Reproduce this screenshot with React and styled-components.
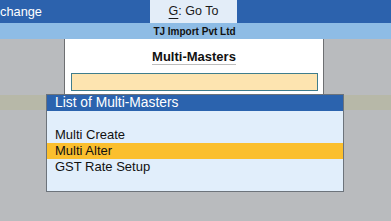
import React from "react";
import styled, { createGlobalStyle } from "styled-components";

const GlobalStyle = createGlobalStyle`
  html, body {
    margin: 0;
    padding: 0;
  }
  body {
    font-family: "Liberation Sans", Arial, sans-serif;
    background: #b9bbbe;
  }
`;

const items = ["Multi Create", "Multi Alter", "GST Rate Setup"];

const App = () => {
  const selected = 1;
  return (
    <Screen>
      <GlobalStyle />
      <TopBar>
        <BarText>change</BarText>
        <GoTo>
          <Key>G</Key>:&nbsp;Go To
        </GoTo>
      </TopBar>
      <CompanyStrip>TJ Import Pvt Ltd</CompanyStrip>
      <Workspace>
        <Panel>
          <Title>Multi-Masters</Title>
          <Input />
        </Panel>
        <ListBox>
          <ListHeader>List of Multi-Masters</ListHeader>
          <ListBody>
            {items.map((item, idx) => (
              <Item key={item} $active={idx === selected}>
                {item}
              </Item>
            ))}
          </ListBody>
        </ListBox>
      </Workspace>
    </Screen>
  );
};

const Screen = styled.div`
  width: 391px;
  height: 221px;
  overflow: hidden;
  display: flex;
  flex-direction: column;
`;

const TopBar = styled.div`
  height: 23px;
  background: #2c62ad;
  display: flex;
  align-items: stretch;
`;

const BarText = styled.div`
  width: 150px;
  color: #ffffff;
  font-size: 12.8px;
  line-height: 23px;
`;

const GoTo = styled.div`
  width: 87px;
  background: #e3edf8;
  color: #1a1a1a;
  font-size: 12.5px;
  line-height: 23px;
  text-align: center;
`;

const Key = styled.span`
  text-decoration: underline;
  text-underline-offset: 3px;
`;

const CompanyStrip = styled.div`
  height: 16px;
  background: #8ebce5;
  color: #111;
  font-size: 10px;
  font-weight: bold;
  line-height: 17px;
  text-align: center;
  padding-right: 2px;
`;

const Workspace = styled.div`
  position: relative;
  flex: 1;
  background: linear-gradient(
    to bottom,
    #b9bbbe 0,
    #b9bbbe 56px,
    #b7b8a8 56px,
    #b7b8a8 71px,
    #b9bbbe 71px
  );
`;

const Panel = styled.div`
  margin-left: 64px;
  width: 258px;
  height: 80px;
  background: #ffffff;
  border-left: 1px solid #6d6f72;
  border-right: 1px solid #6d6f72;
  display: flex;
  flex-direction: column;
  align-items: center;
  padding-top: 11px;
  box-sizing: content-box;
`;

const Title = styled.div`
  font-size: 13px;
  font-weight: bold;
  line-height: 13px;
  color: #111;
  padding-bottom: 1px;
  border-bottom: 1px solid #bdbdbd;
`;

const Input = styled.div`
  margin-top: 8px;
  width: 245px;
  height: 16px;
  background: #fde4b0;
  border: 1px solid #3f7d8d;
`;

const ListBox = styled.div`
  position: absolute;
  top: 55px;
  left: 46px;
  width: 296px;
  border: 1px solid #6c737b;
  background: #e1eefb;
`;

const ListHeader = styled.div`
  height: 16px;
  background: #2b63ae;
  color: #ffffff;
  font-size: 13.8px;
  line-height: 16px;
  padding-left: 8px;
`;

const ListBody = styled.div`
  padding: 16px 0;
`;

const Item = styled.div`
  height: 16px;
  line-height: 16px;
  font-size: 13px;
  padding-left: 8px;
  color: #111;
  background: ${(p) => (p.$active ? "#fbbf2e" : "transparent")};
`;

export default App;
